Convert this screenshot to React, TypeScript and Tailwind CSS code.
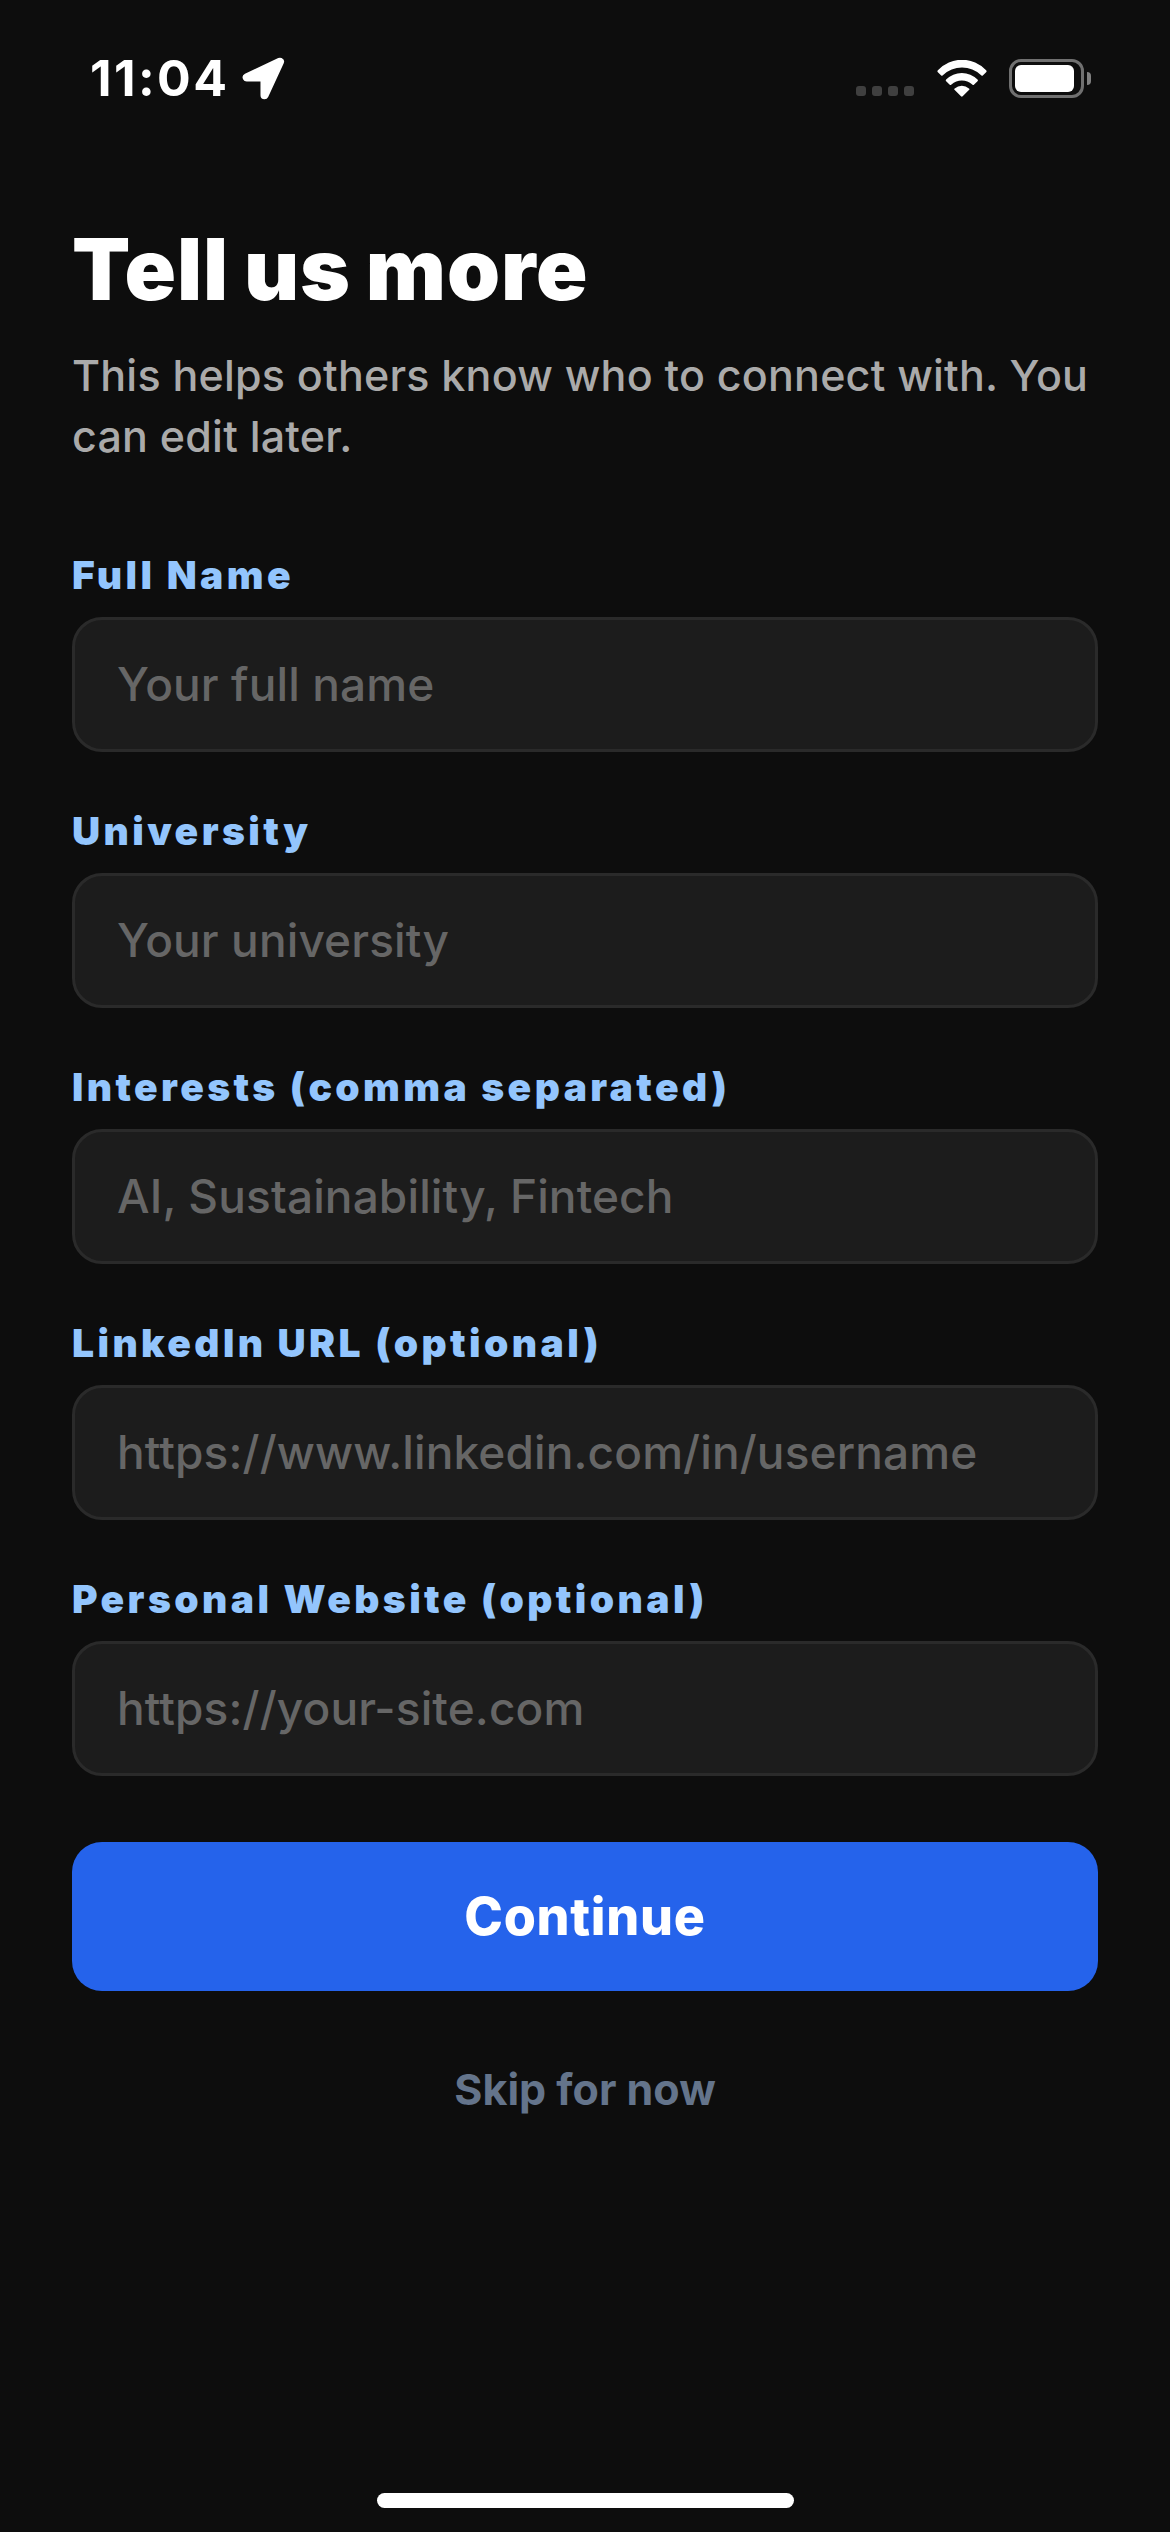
import { useState } from "react";

const fields = [
  { id: "fullName", label: "Full Name", placeholder: "Your full name" },
  { id: "university", label: "University", placeholder: "Your university" },
  { id: "interests", label: "Interests (comma separated)", placeholder: "AI, Sustainability, Fintech" },
  { id: "linkedin", label: "LinkedIn URL (optional)", placeholder: "https://www.linkedin.com/in/username" },
  { id: "website", label: "Personal Website (optional)", placeholder: "https://your-site.com" },
];

function StatusBar() {
  return (
    <header className="flex h-[222px] items-start justify-between pt-12 pl-[90px] pr-[79px] text-white">
      <div className="flex h-[60px] items-center gap-[13px]">
        <span className="text-[50px] leading-[60px] font-bold tracking-[2.4px]">11:04</span>
        {/* location arrow */}
        <svg viewBox="0 0 128 128" className="h-[43px] w-[43px]">
          <path
            d="M14 61H67V114L113 14Z"
            fill="currentColor"
            stroke="currentColor"
            strokeWidth="24"
            strokeLinejoin="round"
          />
        </svg>
      </div>
      <div className="flex h-[60px] items-center">
        <div className="mt-[26px] mr-[23px] flex gap-1.5">
          {[0, 1, 2, 3].map((i) => (
            <span key={i} className="size-2.5 rounded-[3px] bg-[#3f3f3f]" />
          ))}
        </div>
        {/* wifi */}
        <svg viewBox="0 0 150 112" className="mr-[22px] h-[37px] w-[50px]" fill="currentColor">
          <path d="M2 31A99.7 99.7 0 0 1 148 31Q151 34 148 37L138 47Q136 49 133 46A84.5 84.5 0 0 0 17 46Q14 49 12 47L2 37Q-1 34 2 31Z" />
          <path d="M27 59A66.7 66.7 0 0 1 122 59Q125 61 122 64L111 75Q109 77 106 74A48 48 0 0 0 43 74Q40 77 38 75L27 64Q24 61 27 59Z" />
          <path d="M53 86A33 33 0 0 1 96 86Q99 88 96 91L77 110Q74.5 113 72 110L53 91Q50 88 53 86Z" />
        </svg>
        {/* battery */}
        <div className="flex items-center gap-[3px]">
          <div className="h-[39px] w-[75px] rounded-[12px] border-[3px] border-[#707070] p-[3px]">
            <div className="h-[27px] w-[59px] rounded-[6px] bg-white" />
          </div>
          <div className="h-[13px] w-1 rounded-r-full bg-[#808080]" />
        </div>
      </div>
    </header>
  );
}

export default function App() {
  const [values, setValues] = useState<Record<string, string>>({});

  return (
    <div className="relative h-[2532px] w-[1170px] overflow-hidden bg-[#0d0d0d] font-[Inter,sans-serif]">
      <StatusBar />

      <main className="px-[72px]">
        <h1 className="text-[85px] leading-[96px] font-black tracking-[0.9px] text-white [word-spacing:-3px]">
          Tell us more
        </h1>
        <p className="mt-[27px] text-[43px] leading-[61px] font-medium tracking-[0.21px] text-[#aaaaaa]">
          This helps others know who to connect with. You can edit later.
        </p>

        <form className="mt-[84px]" onSubmit={(e) => e.preventDefault()}>
          <div className="flex flex-col gap-[55px]">
            {fields.map((f) => (
              <div key={f.id} className="flex flex-col gap-[18px]">
                <label
                  htmlFor={f.id}
                  className="text-[39px] leading-[48px] font-black tracking-[3.4px] text-[#93c5fd]"
                >
                  {f.label}
                </label>
                <input
                  id={f.id}
                  value={values[f.id] ?? ""}
                  onChange={(e) => setValues({ ...values, [f.id]: e.target.value })}
                  placeholder={f.placeholder}
                  className="h-[135px] w-full rounded-[30px] border-[3px] border-[#2a2a2a] bg-[#1c1c1c] px-[42px] pb-0.5 text-[46px] font-medium tracking-[0.12px] text-white outline-none placeholder:text-[#666666]"
                />
              </div>
            ))}
          </div>

          <button
            type="submit"
            className="mt-[66px] h-[149px] w-full rounded-[30px] bg-[#2563eb] text-[52px] font-extrabold tracking-[0.7px] text-white"
          >
            Continue
          </button>
          <button
            type="button"
            className="mt-[68px] block w-full text-center text-[43px] leading-[60px] font-bold text-[#64748b]"
          >
            Skip for now
          </button>
        </form>
      </main>

      {/* home indicator */}
      <div className="absolute bottom-6 left-[377px] h-[15px] w-[417px] rounded-full bg-white" />
    </div>
  );
}
